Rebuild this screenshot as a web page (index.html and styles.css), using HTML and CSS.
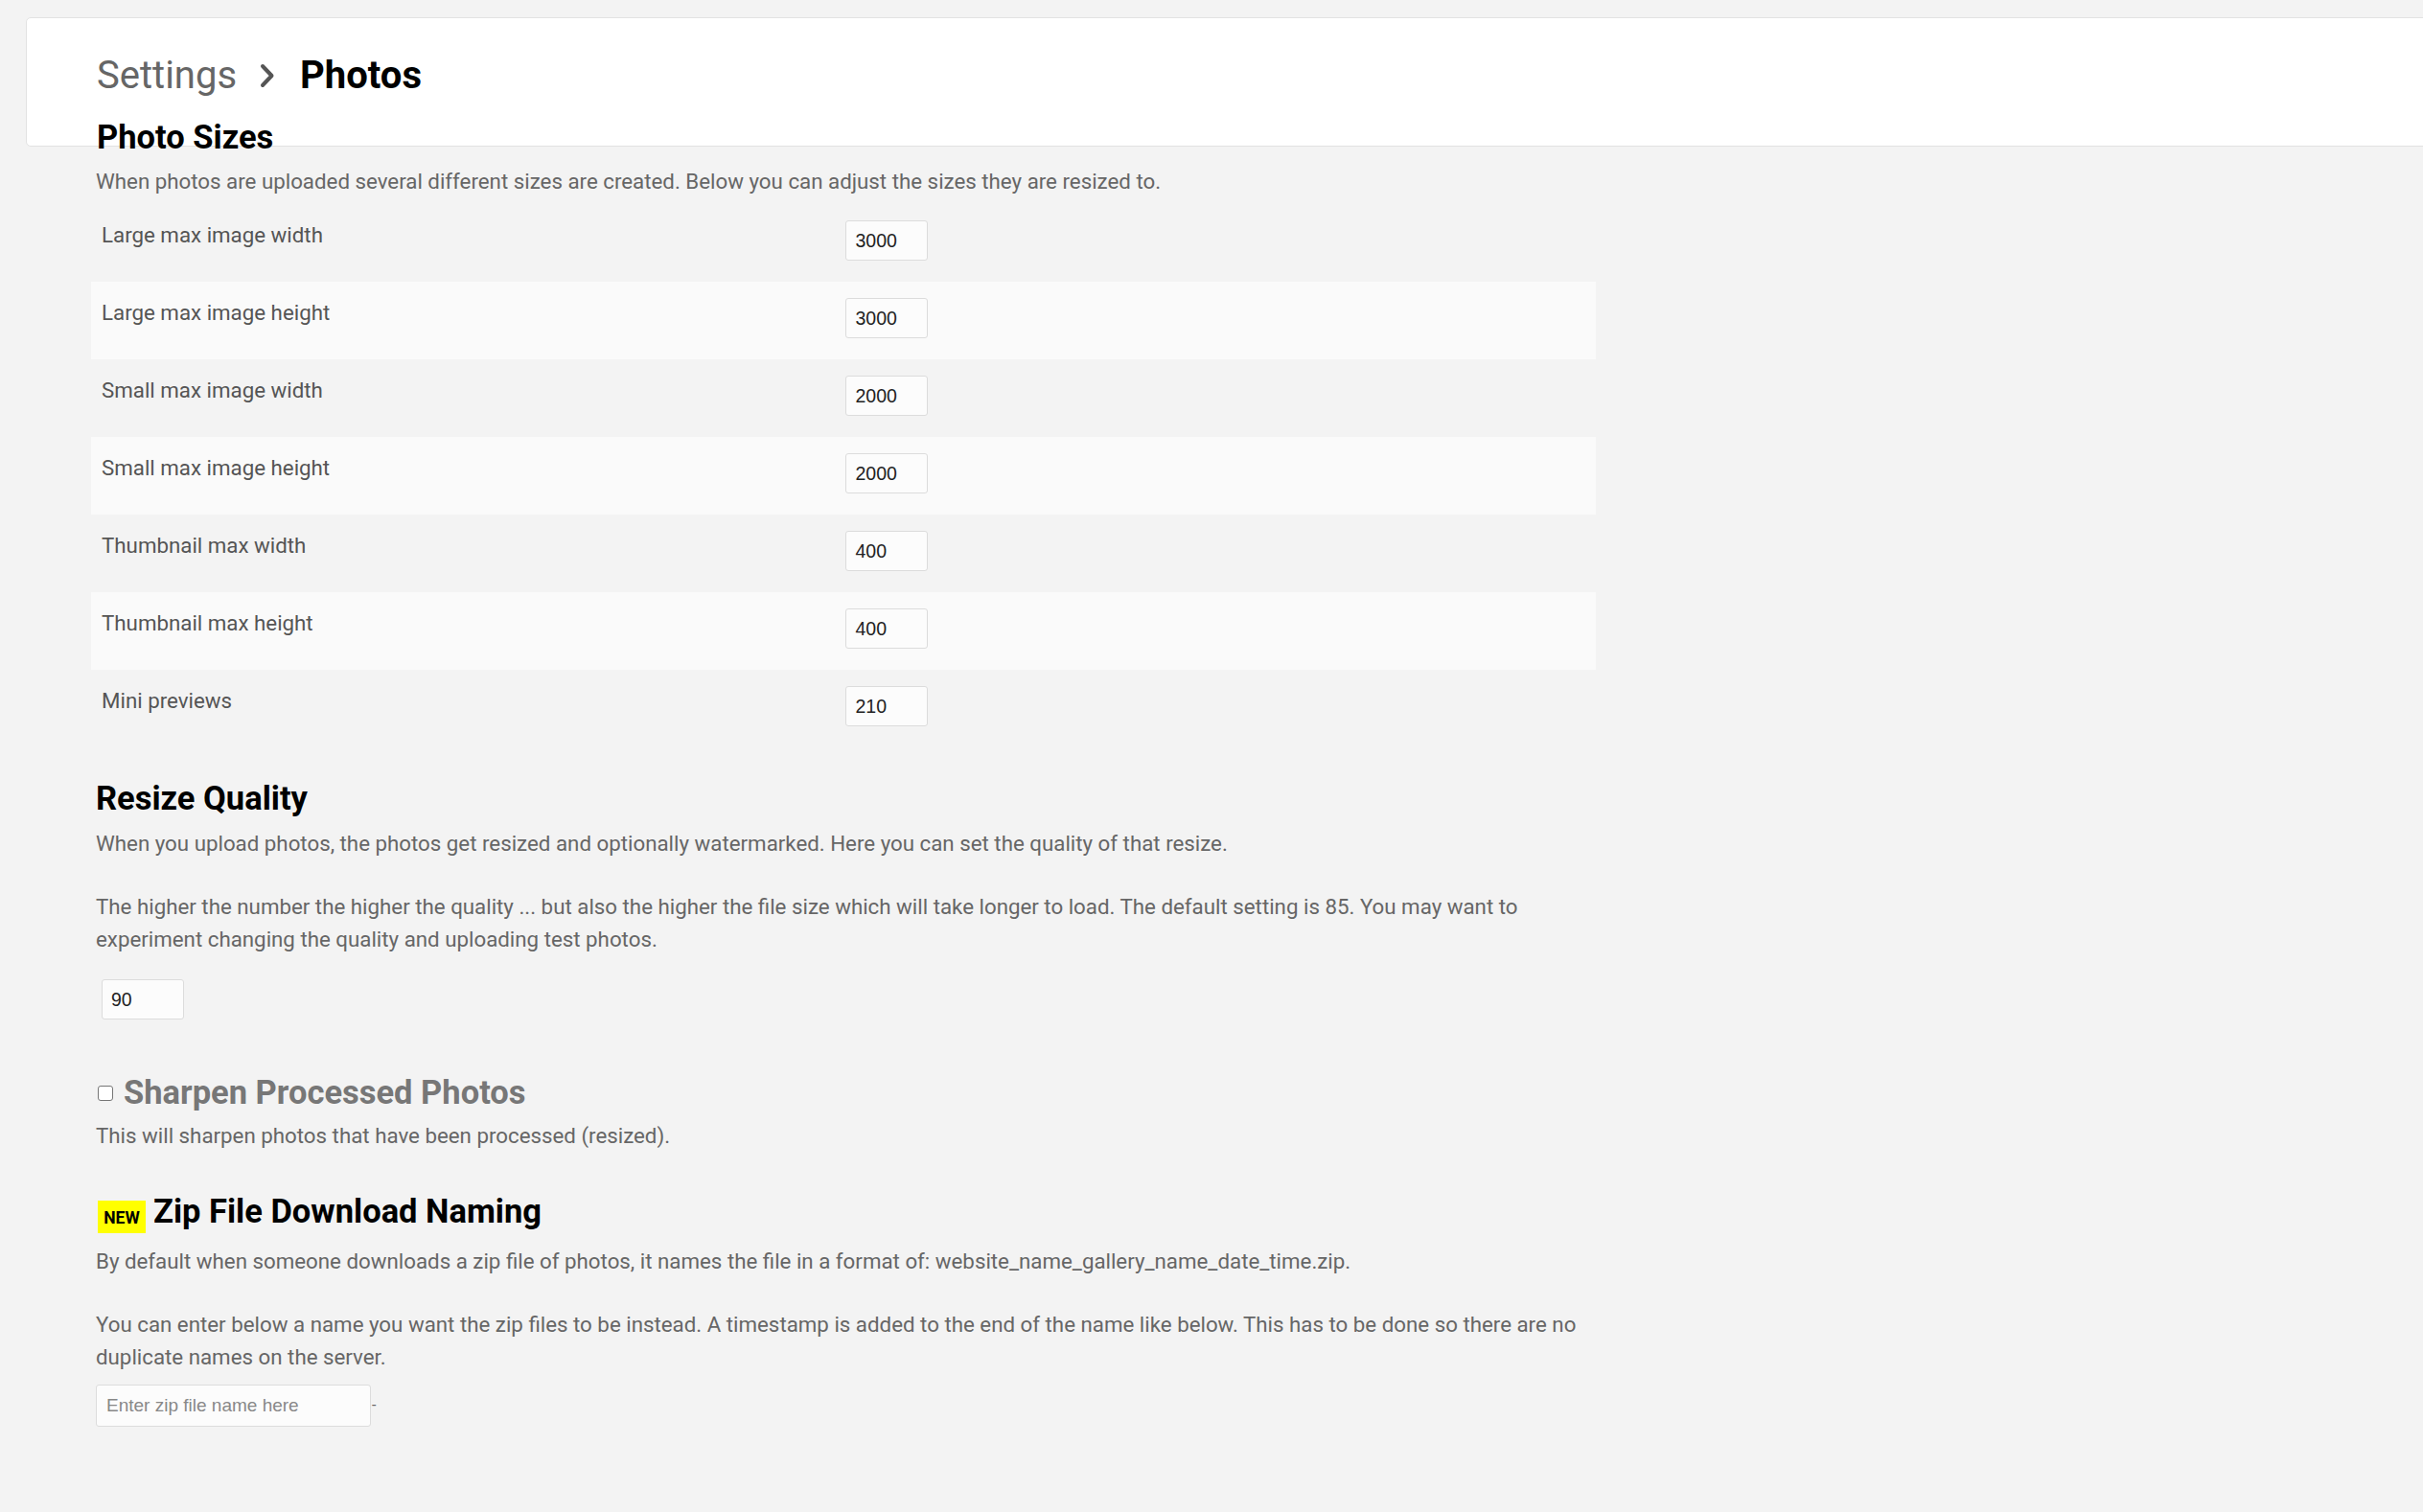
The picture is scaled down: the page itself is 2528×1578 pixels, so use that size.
FILE: index.html
```html
<!DOCTYPE html>
<html lang="en">
<head>
<meta charset="utf-8">
<title>Settings › Photos</title>
<link rel="stylesheet" href="styles.css">
</head>
<body>
<header class="topbar">
  <nav class="crumbs">
    <span class="crumb-parent">Settings</span>
    <svg class="crumb-sep" viewBox="0 0 16 26" width="16" height="26" aria-hidden="true"><polyline points="3,3 12.5,13 3,23" fill="none" stroke="#555" stroke-width="4" stroke-linecap="round" stroke-linejoin="round"/></svg>
    <span class="crumb-current">Photos</span>
  </nav>
  <h2 class="section-title first">Photo Sizes</h2>
</header>

<main class="content">
  <p class="desc intro">When photos are uploaded several different sizes are created. Below you can adjust the sizes they are resized to.</p>

  <table class="sizes">
    <tbody>
      <tr><td class="label">Large max image width</td><td class="field"><input class="num" type="text" value="3000"></td></tr>
      <tr><td class="label">Large max image height</td><td class="field"><input class="num" type="text" value="3000"></td></tr>
      <tr><td class="label">Small max image width</td><td class="field"><input class="num" type="text" value="2000"></td></tr>
      <tr><td class="label">Small max image height</td><td class="field"><input class="num" type="text" value="2000"></td></tr>
      <tr><td class="label">Thumbnail max width</td><td class="field"><input class="num" type="text" value="400"></td></tr>
      <tr><td class="label">Thumbnail max height</td><td class="field"><input class="num" type="text" value="400"></td></tr>
      <tr><td class="label">Mini previews</td><td class="field"><input class="num" type="text" value="210"></td></tr>
    </tbody>
  </table>

  <h2 class="section-title quality">Resize Quality</h2>
  <p class="desc after-title">When you upload photos, the photos get resized and optionally watermarked. Here you can set the quality of that resize.</p>
  <p class="desc para">The higher the number the higher the quality ... but also the higher the file size which will take longer to load. The default setting is 85. You may want to experiment changing the quality and uploading test photos.</p>
  <input class="num quality-input" type="text" value="90">

  <h2 class="section-title sharpen">
    <input class="check" type="checkbox">
    <span>Sharpen Processed Photos</span>
  </h2>
  <p class="desc sharpen-desc">This will sharpen photos that have been processed (resized).</p>

  <h2 class="section-title zip"><span class="badge">NEW</span>Zip File Download Naming</h2>
  <p class="desc zip-desc">By default when someone downloads a zip file of photos, it names the file in a format of: website_name_gallery_name_date_time.zip.</p>
  <p class="desc para">You can enter below a name you want the zip files to be instead. A timestamp is added to the end of the name like below. This has to be done so there are no duplicate names on the server.</p>
  <div class="zip-row">
    <input class="zip-input" type="text" placeholder="Enter zip file name here">
    <span class="zip-dash">-</span>
  </div>
</main>
</body>
</html>
```

FILE: styles.css
```css
html, body {
  margin: 0;
  padding: 0;
}

body {
  background: #f3f3f3;
  font-family: Roboto, "Liberation Sans", Arial, sans-serif;
  color: #666;
  overflow-x: hidden;
}

.topbar {
  box-sizing: border-box;
  margin: 18px 0 0 27px;
  width: calc(100% + 20px);
  height: 135px;
  background: #fff;
  border: 1px solid #e2e2e2;
  border-radius: 5px;
  padding: 36px 0 0 73px;
}

.crumbs {
  display: flex;
  align-items: center;
  height: 48px;
  font-size: 40px;
  line-height: 48px;
}

.crumb-parent {
  color: #666;
  font-weight: 400;
}

.crumb-sep {
  margin: 0 26px 0 24px;
}

.crumb-current {
  color: #000;
  font-weight: 700;
}

.section-title {
  margin: 0;
  font-size: 34.5px;
  line-height: 42px;
  font-weight: 700;
  color: #000;
}

.section-title.first {
  margin-top: 19px;
}

.content {
  padding: 0 0 60px 100px;
  width: 1565px;
}

.desc {
  margin: 0;
  font-size: 22.3px;
  line-height: 34px;
  color: #666;
}

.desc.intro {
  margin-top: 19px;
}

.sizes {
  margin: 7px 0 0 -5px;
  width: 1570px;
  border-collapse: collapse;
  table-layout: fixed;
}

.sizes tr {
  height: 81px;
}

.sizes tr:nth-child(even) {
  background: #fafafa;
}

.sizes td {
  width: 50%;
  padding: 0;
  vertical-align: top;
}

.sizes .label {
  padding: 15px 0 0 11px;
  font-size: 22.3px;
  line-height: 34px;
  color: #555;
}

.sizes .field {
  padding-top: 17px;
}

.sizes .field .num {
  margin-left: -3px;
}

.num {
  box-sizing: border-box;
  display: block;
  width: 86px;
  height: 42px;
  margin: 0;
  padding: 0 9px;
  background: #fcfcfc;
  border: 1px solid #dcdcdc;
  border-radius: 3px;
  font-family: "Liberation Sans", Arial, sans-serif;
  font-size: 19.5px;
  color: #222;
  outline: none;
}

.section-title.quality {
  margin-top: 32px;
}

.desc.after-title {
  margin-top: 9px;
}

.desc.para {
  margin-top: 32px;
}

.quality-input {
  margin: 25px 0 0 6px;
}

.section-title.sharpen {
  display: flex;
  align-items: center;
  margin-top: 55px;
  color: #777;
}

.check {
  appearance: none;
  -webkit-appearance: none;
  box-sizing: border-box;
  width: 16px;
  height: 16px;
  margin: 2px 11px 0 2px;
  background: #fff;
  border: 1.5px solid #767676;
  border-radius: 3px;
}

.desc.sharpen-desc {
  margin-top: 7px;
}

.section-title.zip {
  display: flex;
  align-items: center;
  margin-top: 39px;
}

.badge {
  display: inline-block;
  box-sizing: border-box;
  width: 50px;
  height: 34px;
  margin: 12px 8px 0 2px;
  background: #ffff00;
  color: #000;
  font-size: 17.5px;
  line-height: 36px;
  text-align: center;
  font-weight: 700;
}

.desc.zip-desc {
  margin-top: 12px;
}

.zip-row {
  display: flex;
  align-items: center;
  margin-top: 12px;
}

.zip-input {
  box-sizing: border-box;
  width: 287px;
  height: 44px;
  margin: 0;
  padding: 0 10px;
  background: #fcfcfc;
  border: 1px solid #dcdcdc;
  border-radius: 3px;
  font-family: "Liberation Sans", Arial, sans-serif;
  font-size: 19px;
  color: #333;
  outline: none;
}

.zip-input::placeholder {
  color: #888;
}

.zip-dash {
  margin-left: 1px;
  font-size: 16px;
  line-height: 16px;
  color: #666;
}
```
